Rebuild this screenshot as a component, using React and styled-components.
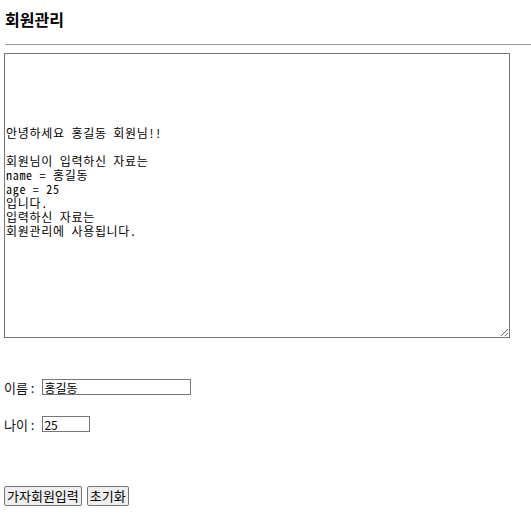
import React, { useState } from "react";
import styled, { createGlobalStyle } from "styled-components";

const GlobalStyle = createGlobalStyle`
  html, body {
    margin: 0;
    padding: 0;
    background: #ffffff;
    overflow: hidden;
  }
  body {
    font-family: "Noto Sans CJK KR", "Liberation Sans", sans-serif;
    color: #000000;
  }
`;

const Page = styled.div`
  display: flex;
  flex-direction: column;
  padding-left: 4px;
`;

const Title = styled.h3`
  margin: 0;
  padding: 9px 0 0 1px;
  height: 20px;
  line-height: 20px;
  font-size: 16px;
  font-weight: 700;
`;

const Rule = styled.hr`
  margin: 15px 0 0 1px;
  border: none;
  border-top: 1px solid #9a9a9a;
  height: 0;
`;

const Memo = styled.textarea`
  box-sizing: border-box;
  margin-top: 8px;
  width: 506px;
  height: 285px;
  padding: 2px 1px;
  border: 1px solid #767676;
  font-family: "Noto Sans Mono CJK KR", "Noto Sans CJK KR", "Liberation Mono", monospace;
  font-size: 12px;
  letter-spacing: 0.7px;
  line-height: 14px;
  color: #000000;
  resize: both;
  outline: none;
`;

const Field = styled.label`
  display: flex;
  align-items: center;
  margin-top: ${({ $gap }) => $gap}px;
  height: 16px;
  font-size: 13px;
  color: #111111;
  gap: 8px;
`;

const Input = styled.input`
  box-sizing: border-box;
  width: ${({ $w }) => $w}px;
  height: 16px;
  padding: 0 1px;
  border: 1px solid #767676;
  font-family: "Noto Sans CJK KR", "Liberation Sans", sans-serif;
  font-size: 12px;
  color: #000000;
  outline: none;
`;

const Buttons = styled.div`
  display: flex;
  gap: 5px;
  margin-top: 54px;
`;

const Button = styled.button`
  box-sizing: border-box;
  height: 20px;
  padding: 0 2px;
  border: 1px solid #767676;
  border-radius: 2px;
  background: #efefef;
  font-family: "Noto Sans CJK KR", "Liberation Sans", sans-serif;
  font-size: 13px;
  line-height: 18px;
  color: #000000;
`;

const initialText =
  "\n\n\n\n\n안녕하세요 홍길동 회원님!!\n\n회원님이 입력하신 자료는\nname = 홍길동\nage = 25\n입니다.\n입력하신 자료는\n회원관리에 사용됩니다.";

export default function App() {
  const [name, setName] = useState("홍길동");
  const [age, setAge] = useState("25");
  const [memo, setMemo] = useState(initialText);

  const reset = () => {
    setName("");
    setAge("");
    setMemo("");
  };

  return (
    <Page>
      <GlobalStyle />
      <Title>회원관리</Title>
      <Rule />
      <Memo value={memo} onChange={(e) => setMemo(e.target.value)} />
      <Field $gap={41}>
        이름 :
        <Input $w={149} value={name} onChange={(e) => setName(e.target.value)} />
      </Field>
      <Field $gap={21}>
        나이 :
        <Input $w={48} value={age} onChange={(e) => setAge(e.target.value)} />
      </Field>
      <Buttons>
        <Button type="button">가자회원입력</Button>
        <Button type="button" onClick={reset}>
          초기화
        </Button>
      </Buttons>
    </Page>
  );
}
